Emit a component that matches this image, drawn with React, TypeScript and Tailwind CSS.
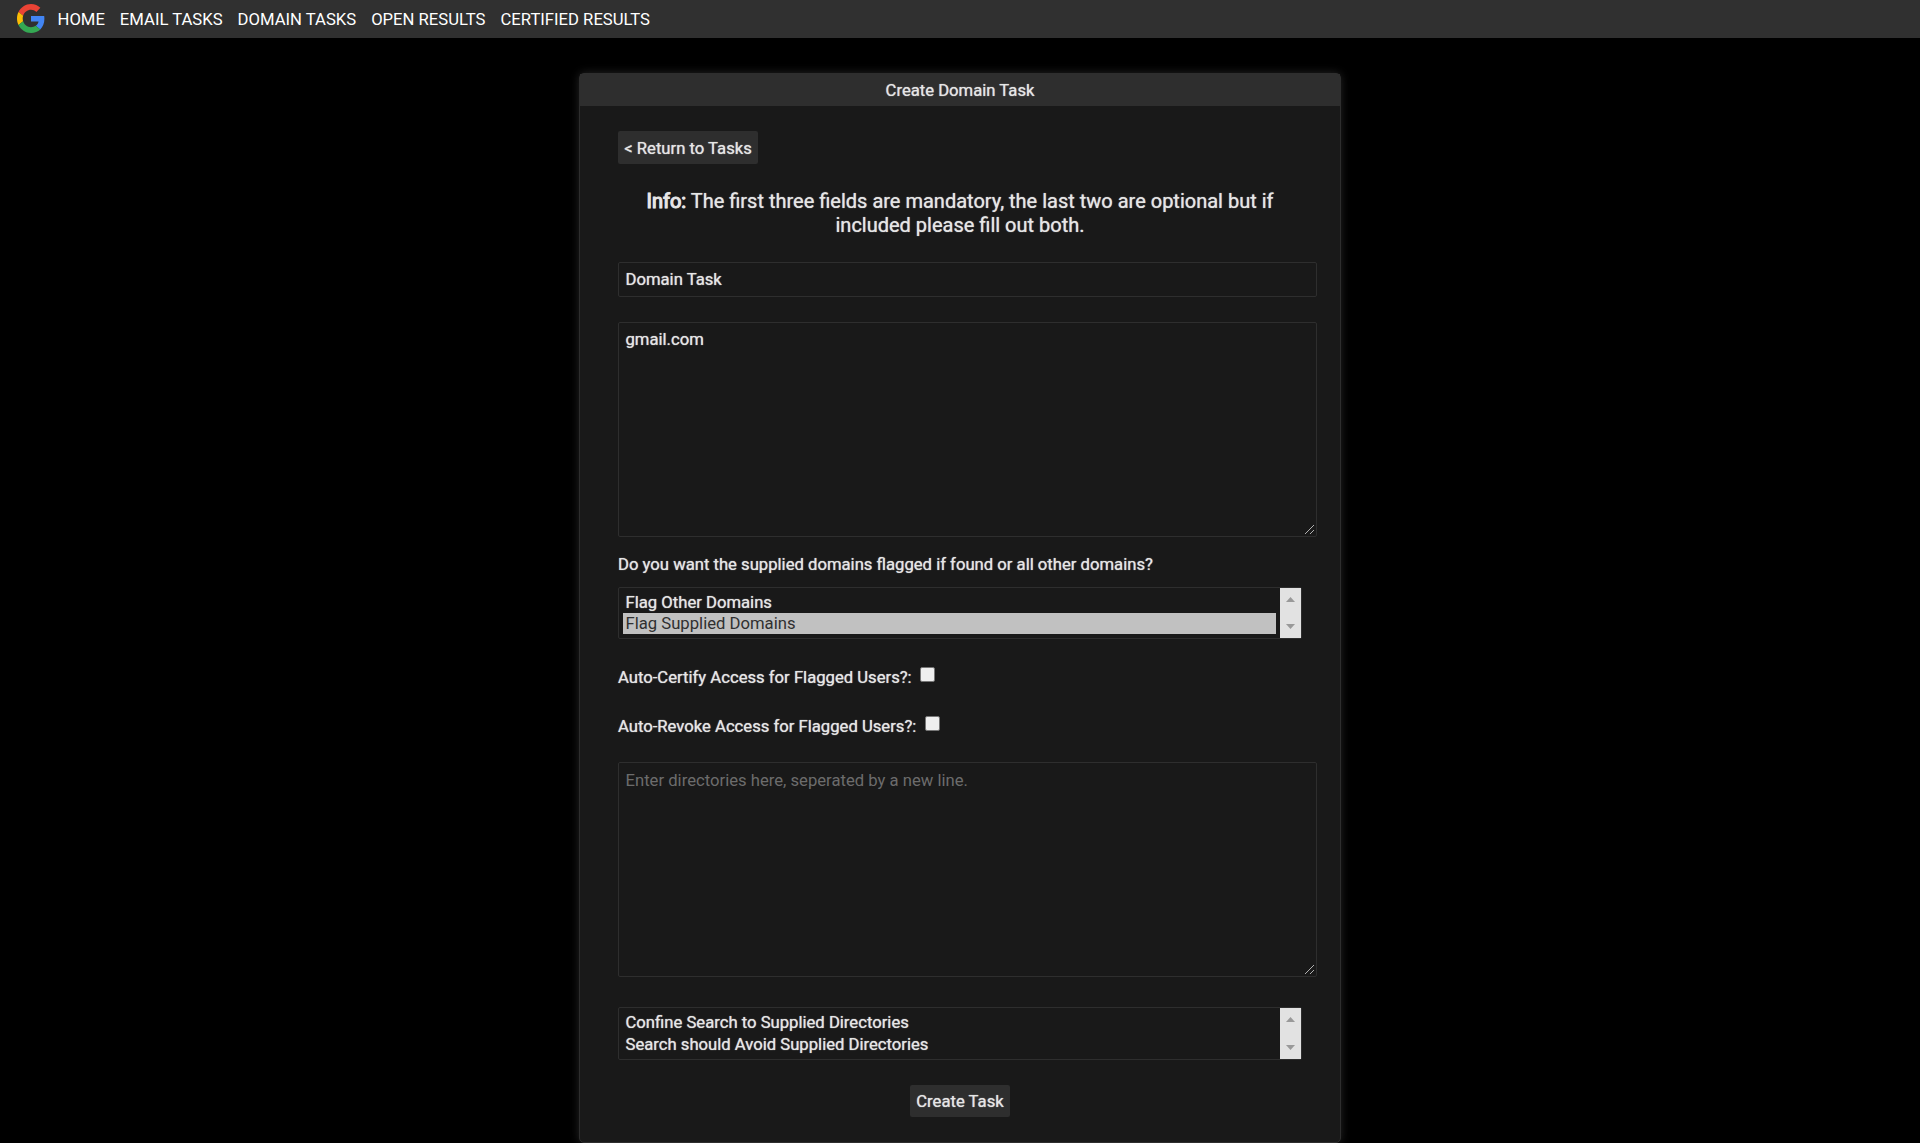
const glow = "[text-shadow:0_0_1px_#e6e6e6e0]";

function GoogleLogo() {
  return (
    <svg viewBox="0 0 48 48" className="-mt-px h-[29px] w-7 shrink-0" preserveAspectRatio="none">
      <path fill="#EA4335" d="M24 9.5c3.54 0 6.71 1.22 9.21 3.6l6.85-6.85C35.9 2.38 30.47 0 24 0 14.62 0 6.51 5.38 2.56 13.22l7.98 6.19C12.43 13.72 17.74 9.5 24 9.5z" />
      <path fill="#4285F4" d="M46.98 24.55c0-1.57-.15-3.09-.38-4.55H24v9.02h12.94c-.58 2.96-2.26 5.48-4.78 7.18l7.73 6c4.51-4.18 7.09-10.36 7.09-17.65z" />
      <path fill="#FBBC05" d="M10.53 28.59c-.48-1.45-.76-2.99-.76-4.59s.27-3.14.76-4.59l-7.98-6.19C.92 16.46 0 20.12 0 24c0 3.88.92 7.54 2.56 10.78l7.97-6.19z" />
      <path fill="#34A853" d="M24 48c6.48 0 11.93-2.13 15.89-5.81l-7.73-6c-2.15 1.45-4.92 2.3-8.16 2.3-6.26 0-11.57-4.22-13.47-9.91l-7.98 6.19C6.51 42.62 14.62 48 24 48z" />
    </svg>
  );
}

function TextBox({ text, muted = false }: { text: string; muted?: boolean }) {
  return (
    <div className={`relative h-[215px] w-[699px] rounded-[2px] border border-[#2e2e2e] px-[6.5px] leading-5 ${muted ? "pt-2" : "pt-[7px]"}`}>
      <span className={muted ? "text-[#6c6c6c] [text-shadow:none]" : ""}>{text}</span>
      <svg viewBox="0 0 10 10" className="absolute right-[1px] bottom-[2px] h-2.5 w-2.5" shapeRendering="crispEdges" fill="#b0b0b0">
        {[0, 1, 2, 3, 4, 5, 6, 7, 8].map((i) => (
          <rect key={i} x={i} y={9 - i} width="1" height="1" />
        ))}
        {[5, 6, 7, 8].map((i) => (
          <rect key={i} x={i} y={14 - i} width="1" height="1" />
        ))}
      </svg>
    </div>
  );
}

function ListBox({ options, selected, className }: { options: string[]; selected?: number; className: string }) {
  const first = selected === undefined ? "h-[22px]" : "h-[21px]";
  return (
    <div className={`flex w-[684px] rounded-[2px] border border-[#2e2e2e] ${className}`}>
      <div className="flex-1 py-1 pr-1 pl-1">
        {options.map((o, i) => (
          <div
            key={o}
            className={
              i === selected
                ? "h-[21px] bg-[#c1c1c1] px-[2.5px] leading-[21px] text-[#303030] [text-shadow:none]"
                : `${first} px-[2.5px] leading-[21px]`
            }
          >
            {o}
          </div>
        ))}
      </div>
      <div className="flex w-[21px] flex-col items-center justify-between bg-[#e2e2e2] py-[9px]">
        <svg viewBox="0 0 9 5" className="h-[5px] w-[9px]" fill="#999"><path d="M0 5 4.5 0 9 5z" /></svg>
        <svg viewBox="0 0 9 5" className="h-[5px] w-[9px]" fill="#999"><path d="M0 0h9L4.5 5z" /></svg>
      </div>
    </div>
  );
}

function CheckRow({ label, className }: { label: string; className: string }) {
  return (
    <div className={`flex h-[19px] items-start leading-[19px] ${className}`}>
      <span>{label}</span>
      <span className="-mt-px ml-[8.4px] h-[15px] w-[15px] rounded-[2px] border border-[#767676] bg-[#efefef]" />
    </div>
  );
}

export default function App() {
  return (
    <div className="h-[1143px] overflow-hidden bg-black font-[Roboto,sans-serif] text-[16.667px] text-[#e6e6e6]">
      <nav className="flex h-[38px] items-center bg-[#303030] pl-[17px] text-white">
        <GoogleLogo />
        <div className="flex gap-[15px] pt-px pl-[12.5px] leading-5 whitespace-nowrap">
          {["HOME", "EMAIL TASKS", "DOMAIN TASKS", "OPEN RESULTS", "CERTIFIED RESULTS"].map((t) => (
            <a key={t}>{t}</a>
          ))}
        </div>
      </nav>

      <main className={`mx-auto mt-[35px] h-[1070px] w-[762px] rounded-[5px] border border-[#2e2e2e] bg-[#191919] shadow-[0_0_10px_#262626] ${glow}`}>
        <header className="h-8 bg-[#2e2e2e] text-center leading-[33px]">Create Domain Task</header>
        <div className="flex flex-col items-start pl-[38px]">
          <button className="mt-[25px] h-[33px] w-[140px] rounded-[2px] bg-[#2e2e2e] pt-px leading-[33px] whitespace-nowrap" style={{ textShadow: "inherit" }}>
            &lt; Return to Tasks
          </button>
          <p className="mt-[25px] w-[684px] px-5 text-center text-[20px] leading-6">
            <b className="font-normal [-webkit-text-stroke:1px_#e6e6e6]">Info:</b> The first three fields are mandatory, the last two are optional but if included please fill out both.
          </p>
          <div className="mt-[25px] h-[35px] w-[699px] rounded-[2px] border border-[#2e2e2e] px-[6.5px] leading-[33px]">Domain Task</div>
          <div className="mt-[25px]">
            <TextBox text="gmail.com" />
          </div>
          <p className="mt-[18px] h-[19px] leading-[19px]">Do you want the supplied domains flagged if found or all other domains?</p>
          <ListBox options={["Flag Other Domains", "Flag Supplied Domains"]} selected={1} className="mt-[13px] h-[52px]" />
          <CheckRow label="Auto-Certify Access for Flagged Users?:" className="mt-[29px]" />
          <CheckRow label="Auto-Revoke Access for Flagged Users?:" className="mt-[30px]" />
          <div className="mt-[26px]">
            <TextBox text="Enter directories here, seperated by a new line." muted />
          </div>
          <ListBox
            options={["Confine Search to Supplied Directories", "Search should Avoid Supplied Directories"]}
            className="mt-[30px] h-[53px]"
          />
          <button className="mt-[25px] ml-[292px] h-8 w-[100px] rounded-[2px] bg-[#2e2e2e] leading-[33px] whitespace-nowrap" style={{ textShadow: "inherit" }}>
            Create Task
          </button>
        </div>
      </main>
    </div>
  );
}
